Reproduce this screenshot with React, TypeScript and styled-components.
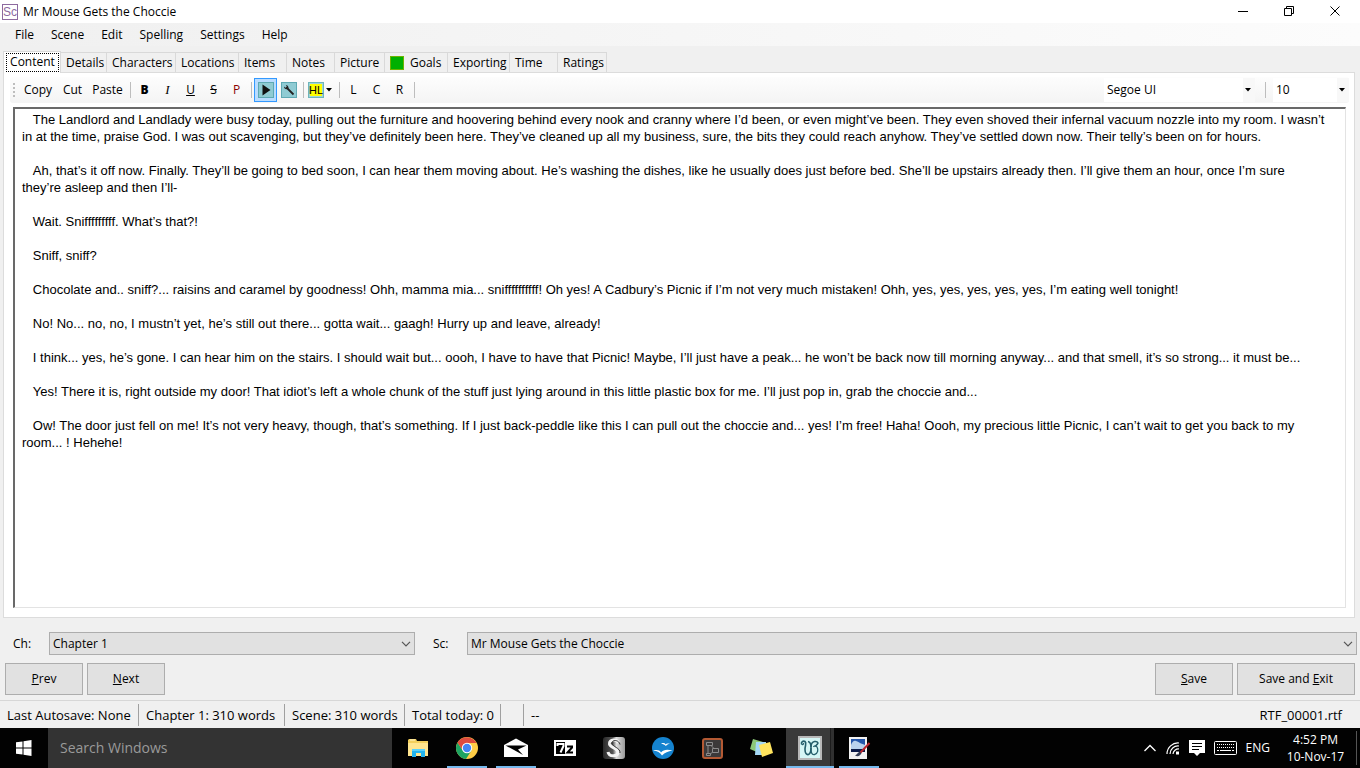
import React from 'react';
import styled, { createGlobalStyle, css } from 'styled-components';

const GlobalStyle = createGlobalStyle`
  *, *::before, *::after { box-sizing: border-box; }
  body { margin: 0; background: #f0f0f0; }
  body, button, select, textarea, input {
    font-family: 'Open Sans', 'Noto Sans', sans-serif;
    font-size: 12px;
    line-height: 16px;
    color: #000;
  }
  button { margin: 0; padding: 0; border: 0; background: none; }
`;

const Window = styled.div`
  display: flex;
  flex-direction: column;
  min-height: 100vh;
`;

const TitleBar = styled.header`
  display: flex;
  align-items: center;
  height: 23px;
  padding: 0 2px;
  background: #fff;
`;

const AppIcon = styled.span`
  width: 16px;
  height: 16px;
  border: 1px solid #8d6a9f;
  color: #8d6a9f;
  font: 12px/14px 'Liberation Sans', sans-serif;
  text-align: center;
`;

const Title = styled.h1`
  flex: 1;
  margin: 0 0 0 5px;
  font-size: 12px;
  font-weight: 400;
`;

const CaptionButton = styled.button`
  display: grid;
  place-items: center;
  width: 46px;
  height: 20px;
`;

const MenuBar = styled.nav`
  display: flex;
  align-items: center;
  gap: 1px;
  height: 23px;
  padding: 0 7px;
  background: linear-gradient(90deg, #f0f0f0, #fcfcfc);
`;

const MenuItem = styled.button`
  height: 20px;
  padding: 0 8px;
`;

const TabStrip = styled.div`
  display: flex;
  align-items: flex-end;
  height: 26px;
  padding: 0 3px;
`;

const Tab = styled.button<{ $width: number; $active?: boolean }>`
  display: flex;
  align-items: center;
  gap: 6px;
  width: ${p => p.$width}px;
  height: 20px;
  padding-left: 5px;
  border: 1px solid #d9d9d9;
  border-left-width: 0;
  border-bottom: 0;
  white-space: nowrap;
  ${p => p.$active && css`
    z-index: 1;
    height: 22px;
    margin-bottom: -1px;
    padding: 1px 1px 2px 2px;
    border-left-width: 1px;
    background: #fff;
  `}
`;

const FocusRing = styled.span`
  flex: 1;
  height: 19px;
  border: 1px dotted #000;
  line-height: 16px;
  text-align: center;
`;

const GoalMark = styled.span`
  width: 14px;
  height: 14px;
  border: 1px solid #6cb400;
  background: #00b000;
`;

const Panel = styled.main`
  display: flex;
  flex: 1;
  flex-direction: column;
  margin: 0 5px 0 3px;
  padding: 4px 8px 9px 9px;
  border: 1px solid #dcdcdc;
  background: #fff;
`;

const Toolbar = styled.div`
  display: flex;
  align-items: center;
  height: 26px;
  margin: 0 -3px 4px;
  padding-left: 3px;
  border-radius: 3px;
  background: linear-gradient(#fdfdfd, #f4f4f4);
`;

const Grip = styled.span`
  width: 2px;
  height: 14px;
  margin-right: 4px;
  background: repeating-linear-gradient(#bdbdbd 0 2px, transparent 2px 4px);
`;

const ToolButton = styled.button<{ $width: number }>`
  width: ${p => p.$width}px;
  height: 24px;
`;

const Bold = styled.b`
  font-weight: 800;
`;

const Italic = styled.i`
  font-family: 'Liberation Serif', serif;
  font-size: 13px;
`;

const Red = styled.span`
  color: #8b0000;
`;

const IconTool = styled.button<{ $pressed?: boolean }>`
  display: grid;
  place-items: center;
  width: 23px;
  height: 24px;
  border: 1px solid ${p => (p.$pressed ? '#3399ff' : 'transparent')};
  background: ${p => (p.$pressed ? '#b9dcff' : 'transparent')};
`;

const HighlightTool = styled.button`
  display: flex;
  align-items: center;
  gap: 2px;
  width: 30px;
  height: 24px;
  padding-left: 2px;
`;

const Swatch = styled.span`
  width: 16px;
  height: 16px;
  border: 1px solid #6fb5bb;
  background: linear-gradient(#ffff00, #ffff00) center / 12px 12px no-repeat, #9fd6da;
  font: 11px/14px 'Liberation Sans', sans-serif;
  text-align: center;
`;

const Divider = styled.span<{ $roomy?: boolean }>`
  width: 1px;
  height: 16px;
  margin: ${p => (p.$roomy ? '0 7px 0 10px' : '0 2px 0 3px')};
  background: #bdbdbd;
`;

const Spacer = styled.span`
  flex: 1;
`;

const SelectWrap = styled.span<{ $basis?: string }>`
  display: grid;
  align-items: center;
  flex: ${p => p.$basis ?? '1 1 0'};
  min-width: 0;

  & > * { grid-area: 1 / 1; }
  & > svg { justify-self: end; pointer-events: none; margin-right: 4px; }
`;

const ToolSelect = styled.select`
  width: 100%;
  height: 24px;
  padding: 0 20px 0 3px;
  border: 0;
  appearance: none;
  background: linear-gradient(90deg, #fff calc(100% - 12px), #f8f8f8 0);
`;

const FormSelect = styled.select`
  width: 100%;
  height: 23px;
  padding: 0 20px 0 3px;
  border: 1px solid #adadad;
  border-radius: 0;
  appearance: none;
  background: #e1e1e1;
`;

const Editor = styled.textarea`
  flex: 1;
  width: 100%;
  padding: 2px 19px 0 7px;
  border: solid;
  border-width: 2px 1px 1px 2px;
  border-color: #696969 #e3e3e3 #e3e3e3 #696969;
  outline: 0;
  resize: none;
  overflow: hidden;
  background: #fff;
  font-family: 'Liberation Sans', Arial, sans-serif;
  font-size: 13px;
  line-height: 17px;
`;

const PickerRow = styled.div`
  display: flex;
  align-items: center;
  margin-top: 14px;
  padding: 0 3px 0 13px;
`;

const PickerLabel = styled.label<{ $gap?: number }>`
  width: ${p => (p.$gap ? 52 : 36)}px;
  padding-left: ${p => p.$gap ?? 0}px;
`;

const Actions = styled.div`
  display: flex;
  gap: 4px;
  margin: 8px 5px 5px;
`;

const PushButton = styled.button<{ $wide?: boolean }>`
  width: ${p => (p.$wide ? 118 : 78)}px;
  height: 32px;
  border: 1px solid #adadad;
  background: #e1e1e1;
`;

const StatusBar = styled.footer`
  display: flex;
  align-items: center;
  height: 28px;
  padding: 2px 18px 2px 0;
  border-top: 1px solid #d7d7d7;
  font-size: 13px;
`;

const StatusCell = styled.span<{ $width: number; $last?: boolean }>`
  width: ${p => p.$width}px;
  height: 22px;
  padding-left: 7px;
  border-right: ${p => (p.$last ? '0' : '1px solid #a0a0a0')};
  line-height: 22px;
  white-space: nowrap;
`;

const TaskBar = styled.div`
  display: flex;
  align-items: stretch;
  height: 40px;
  background: #020202;
  color: #fff;
`;

const StartButton = styled.button`
  display: grid;
  place-items: center;
  width: 48px;
`;

const Search = styled.input`
  width: 344px;
  margin: 0 2px 0 0;
  padding: 0 12px;
  border: 0;
  background: #333;
  color: #fff;
  font-size: 14px;
  &::placeholder { color: #9a9a9a; opacity: 1; }
`;

const TaskButton = styled.button<{ $running?: boolean; $active?: boolean }>`
  display: grid;
  place-items: center;
  width: 48px;
  margin-right: 1px;
  background: ${p =>
    p.$active
      ? 'linear-gradient(#76b9ed, #76b9ed) bottom / 100% 2px no-repeat, linear-gradient(90deg, #3a3a3a 44px, #1c1c1c 44px 45px, #303030 45px)'
      : p.$running
        ? 'linear-gradient(#76b9ed, #76b9ed) bottom / 40px 2px no-repeat'
        : 'none'};
`;

const Tray = styled.div`
  display: flex;
  align-items: center;
  gap: 9px;
  margin-left: auto;
  padding-right: 3px;
`;

const TrayButton = styled.button`
  display: grid;
  color: #fff;
`;

const Clock = styled.time`
  width: 78px;
  padding-right: 4px;
  border-right: 1px solid #555;
  line-height: 17px;
  text-align: center;
`;

const MANUSCRIPT = [
  "The Landlord and Landlady were busy today, pulling out the furniture and hoovering behind every nook and cranny where I’d been, or even might’ve been. They even shoved their infernal vacuum nozzle into my room. I wasn’t in at the time, praise God. I was out scavenging, but they’ve definitely been here. They’ve cleaned up all my business, sure, the bits they could reach anyhow. They’ve settled down now. Their telly’s been on for hours.",
  "Ah, that’s it off now. Finally. They’ll be going to bed soon, I can hear them moving about. He’s washing the dishes, like he usually does just before bed. She’ll be upstairs already then. I’ll give them an hour, once I’m sure they’re asleep and then I’ll-",
  "Wait. Snifffffffff. What’s that?!",
  "Sniff, sniff?",
  "Chocolate and.. sniff?... raisins and caramel by goodness! Ohh, mamma mia... sniffffffffff! Oh yes! A Cadbury’s Picnic if I’m not very much mistaken! Ohh, yes, yes, yes, yes, yes, I’m eating well tonight!",
  "No! No... no, no, I mustn’t yet, he’s still out there... gotta wait... gaagh! Hurry up and leave, already!",
  "I think... yes, he’s gone. I can hear him on the stairs. I should wait but... oooh, I have to have that Picnic! Maybe, I’ll just have a peak... he won’t be back now till morning anyway... and that smell, it’s so strong... it must be...",
  "Yes! There it is, right outside my door! That idiot’s left a whole chunk of the stuff just lying around in this little plastic box for me. I’ll just pop in, grab the choccie and...",
  "Ow! The door just fell on me! It’s not very heavy, though, that’s something. If I just back-peddle like this I can pull out the choccie and... yes! I’m free! Haha! Oooh, my precious little Picnic, I can’t wait to get you back to my room... ! Hehehe!",
].map(p => '\u00a0\u00a0\u00a0' + p).join('\n\n');

const MENUS = ['File', 'Scene', 'Edit', 'Spelling', 'Settings', 'Help'];

const TABS: [string, number][] = [
  ['Details', 46], ['Characters', 69], ['Locations', 63], ['Items', 48], ['Notes', 48],
  ['Picture', 50], ['Goals', 63], ['Exporting', 62], ['Time', 48], ['Ratings', 49],
];

const Triangle = () => (
  <svg width="6" height="4" viewBox="0 0 6 4"><path d="M0 0h6L3 3.5z" fill="#000" /></svg>
);

const Chevron = () => (
  <svg width="10" height="6" viewBox="0 0 10 6" fill="none" stroke="#555" strokeWidth="1.2"><path d="M1 .8l4 4 4-4" /></svg>
);

const PlayIcon = () => (
  <svg width="16" height="16" viewBox="0 0 16 16">
    <rect x=".5" y=".5" width="15" height="15" fill="#8fcbd3" stroke="#5ea9b3" />
    <path d="M4.500 2.500v11l8-5.500z" fill="#111" />
  </svg>
);

const WrenchIcon = () => (
  <svg width="16" height="16" viewBox="0 0 16 16">
    <rect x=".5" y=".5" width="15" height="15" fill="#8fcbd3" stroke="#5ea9b3" />
    <path d="M6.500 6.500l6 6" stroke="#222" strokeWidth="1.800" />
    <path d="M3 4.500c0 2 1.500 3.200 3.500 2.700l1-1C7.800 4.500 6.500 3 4.800 3l1 1.500L4.500 5.700z" fill="#222" />
  </svg>
);

const FolderIcon = () => (
  <svg width="22" height="20" viewBox="0 0 22 20">
    <path d="M1 2l1-1h7l1 2h11v15H1z" fill="#f3cf5c" />
    <path d="M1 5h20v13H1z" fill="#ffe58f" />
    <path d="M3 1.500h5v1H3z" fill="#fff6d0" />
    <path d="M5 19v-8h13v8h-4v-4H9v4z" fill="#23b5ee" />
    <path d="M5 11h13v2H5z" fill="#5ad1fa" />
  </svg>
);

const ChromeIcon = () => (
  <svg width="22" height="22" viewBox="0 0 22 22">
    <circle cx="11" cy="11" r="11" fill="#ffcd46" />
    <path d="M1.500 5.500A11 11 0 0 0 10 22l5.500-8.500L11 11l-4.500 2z" fill="#1da462" />
    <path d="M1.500 5.500L6.500 13l4.500-7h9.500A11 11 0 0 0 1.500 5.500z" fill="#dd4b3e" />
    <circle cx="11" cy="11" r="5.200" fill="#fff" />
    <circle cx="11" cy="11" r="4.200" fill="#4285f4" />
  </svg>
);

const MailIcon = () => (
  <svg width="24" height="20" viewBox="0 0 24 20">
    <path d="M0 7l12-6.500L24 7v12H0z" fill="#fff" />
    <path d="M1.500 7.500h21L14 11.500l5 5.500-9-5z" fill="#020202" />
  </svg>
);

const ZipIcon = () => (
  <svg width="22" height="16" viewBox="0 0 22 16">
    <path d="M0 0h22v16H0z" fill="#fff" />
    <path d="M2 2h9v12H2z" fill="#000" />
    <path d="M3.500 6V4h6v2L6.500 12.500" fill="none" stroke="#fff" strokeWidth="2" />
    <path d="M13 6.500h5v1l-4.500 5H19" fill="none" stroke="#000" strokeWidth="2" />
  </svg>
);

const ScrivenerIcon = () => (
  <svg width="22" height="22" viewBox="0 0 22 22">
    <defs>
      <linearGradient id="scriv"><stop offset="0" stopColor="#2a2a2a" /><stop offset=".45" stopColor="#555" /><stop offset=".6" stopColor="#ddd" /><stop offset="1" stopColor="#999" /></linearGradient>
    </defs>
    <rect width="22" height="22" rx="3" fill="url(#scriv)" />
    <path d="M15.500 6C14 1.500 6 2 6.500 7c.5 4 9 4 8.500 8.500C14.500 20 6 20 5 15" fill="none" stroke="#f4f4f4" strokeWidth="3" />
    <path d="M17 7.500C16 2.500 9 2.500 9 6c0 4 8.500 4.500 8 10" fill="none" stroke="#333" />
  </svg>
);

const OfficeIcon = () => (
  <svg width="22" height="22" viewBox="0 0 22 22">
    <circle cx="11" cy="11" r="11" fill="#1583cf" />
    <path d="M9 6.500c2.500-.8 4-.3 4.500 1 1-1.300 2.500-1.300 4.500-.8-2 .3-3 1-4.200 2.300-1.300-1.500-2.500-2-4.800-2.500z" fill="#fff" />
    <path d="M1 13.500c4-1 6.500-.5 8 2 2.500-3 6-3.300 11.500-2-4.500 1-7.500 2-10.500 5-2-3-4.500-4.500-9-5z" fill="#fff" />
  </svg>
);

const DiagramIcon = () => (
  <svg width="21" height="21" viewBox="0 0 21 21" fill="none">
    <rect x="1" y="1" width="19" height="19" rx="2" fill="#3c3a3a" stroke="#b45a34" strokeWidth="2" />
    <path d="M4.500 4.500h6v3h-6zM10.500 10.500h6v4h-6zM4.500 15.500h4v2h-4zM6 7.500v8M9 7.500l3 3M8.500 16l2-2" stroke="#8c8c8c" />
  </svg>
);

const NotesIcon = () => (
  <svg width="24" height="20" viewBox="0 0 24 20">
    <path d="M4 1l10 3-4 11-9-4z" fill="#8cc878" />
    <path d="M7 4h10v13H6z" fill="#a5d8f5" />
    <path d="M10 7l11-3 3 11-11 4z" fill="#ffe45e" />
  </svg>
);

const WriterIcon = () => (
  <svg width="24" height="24" viewBox="0 0 24 24" fill="none" stroke="#245e6b">
    <rect x="1" y="1" width="22" height="22" fill="#d5f6f5" stroke="#b8b8b8" strokeWidth="2" />
    <path d="M3.500 8C3 5.500 5.500 4.500 7 5.500c2 1.500 0 4 0 8 0 3.500 1.500 5.500 3.500 5 2-.8 2.500-3.500 2.500-7 0-3-.5-5.500-3-6" strokeWidth="1.600" />
    <path d="M3.500 8c1 1 2.500.3 2-1M13 12c0 4 .5 7 3.500 6.500 3.500-.8 4-5 2.500-7.500-1-1.500-3-1.500-3.500 0" strokeWidth="1.300" />
    <path d="M13 11c0-3 1-5 3.500-5.500 1.500-.3 3 .2 3.500 1.500-.5 1.500-2 2.500-3 3.500" strokeWidth="1.500" />
  </svg>
);

const PaintIcon = () => (
  <svg width="24" height="24" viewBox="0 0 24 24">
    <path d="M2 1h18v22H2z" fill="#f2f2f2" />
    <path d="M4 3h14v12H4z" fill="#2456ab" />
    <path d="M4 9c1-3 3-5 5-4s3 1 4 2 4 1 5 2v5H4z" fill="#b9d2ee" />
    <path d="M4 13h14v3H4z" fill="#0a1a48" />
    <path d="M22.500 7L13 17" stroke="#b9242c" strokeWidth="2" />
    <path d="M13 16c-2.500 0-2.500 2.500-5 3.500 2.500 1.500 5.500.5 6.500-2.500z" fill="#333c55" />
  </svg>
);

const TASKS: { name: string; icon: React.ReactNode; running?: boolean; active?: boolean }[] = [
  { name: 'File Explorer', icon: <FolderIcon /> },
  { name: 'Chrome', icon: <ChromeIcon />, running: true },
  { name: 'Mail', icon: <MailIcon />, running: true },
  { name: '7-Zip', icon: <ZipIcon /> },
  { name: 'Scrivener', icon: <ScrivenerIcon /> },
  { name: 'OpenOffice', icon: <OfficeIcon /> },
  { name: 'Diagrams', icon: <DiagramIcon /> },
  { name: 'Sticky Notes', icon: <NotesIcon /> },
  { name: 'yWriter', icon: <WriterIcon />, active: true },
  { name: 'Paint', icon: <PaintIcon />, running: true },
];

export default function App() {
  return (
    <Window>
      <GlobalStyle />
      <TitleBar>
        <AppIcon>Sc</AppIcon>
        <Title>Mr Mouse Gets the Choccie</Title>
        <CaptionButton aria-label="Minimize">
          <svg width="10" height="10"><path d="M0 4.500h10" stroke="#000" /></svg>
        </CaptionButton>
        <CaptionButton aria-label="Restore">
          <svg width="11" height="11" fill="none" stroke="#000"><path d="M.5 2.500h7v7h-7zM2.500 2.500v-2h7v7h-2" /></svg>
        </CaptionButton>
        <CaptionButton aria-label="Close">
          <svg width="11" height="11" stroke="#000"><path d="M.5 .5l9 9M9.500 .5l-9 9" /></svg>
        </CaptionButton>
      </TitleBar>

      <MenuBar>
        {MENUS.map(m => <MenuItem key={m}>{m}</MenuItem>)}
      </MenuBar>

      <TabStrip role="tablist">
        <Tab role="tab" aria-selected $width={58} $active><FocusRing>Content</FocusRing></Tab>
        {TABS.map(([name, width]) => (
          <Tab key={name} role="tab" $width={width}>
            {name === 'Goals' && <GoalMark />}
            {name}
          </Tab>
        ))}
      </TabStrip>

      <Panel>
        <Toolbar role="toolbar">
          <Grip />
          <ToolButton $width={38}>Copy</ToolButton>
          <ToolButton $width={31}>Cut</ToolButton>
          <ToolButton $width={39}>Paste</ToolButton>
          <Divider />
          <ToolButton $width={23}><Bold>B</Bold></ToolButton>
          <ToolButton $width={23}><Italic>I</Italic></ToolButton>
          <ToolButton $width={23}><u>U</u></ToolButton>
          <ToolButton $width={23}><s>S</s></ToolButton>
          <ToolButton $width={23}><Red>P</Red></ToolButton>
          <Divider />
          <IconTool $pressed aria-label="Play"><PlayIcon /></IconTool>
          <IconTool aria-label="Tools"><WrenchIcon /></IconTool>
          <Divider />
          <HighlightTool><Swatch>HL</Swatch><Triangle /></HighlightTool>
          <Divider />
          <ToolButton $width={23}>L</ToolButton>
          <ToolButton $width={23}>C</ToolButton>
          <ToolButton $width={23}>R</ToolButton>
          <Divider />
          <Spacer />
          <SelectWrap $basis="0 0 151px">
            <ToolSelect aria-label="Font"><option>Segoe UI</option></ToolSelect>
            <Triangle />
          </SelectWrap>
          <Divider $roomy />
          <SelectWrap $basis="0 0 76px">
            <ToolSelect aria-label="Font size"><option>10</option></ToolSelect>
            <Triangle />
          </SelectWrap>
        </Toolbar>
        <Editor aria-label="Scene content" spellCheck={false} defaultValue={MANUSCRIPT} />
      </Panel>

      <PickerRow>
        <PickerLabel htmlFor="chapter">Ch:</PickerLabel>
        <SelectWrap $basis="0 0 366px">
          <FormSelect id="chapter"><option>Chapter 1</option></FormSelect>
          <Chevron />
        </SelectWrap>
        <PickerLabel htmlFor="scene" $gap={18}>Sc:</PickerLabel>
        <SelectWrap>
          <FormSelect id="scene"><option>Mr Mouse Gets the Choccie</option></FormSelect>
          <Chevron />
        </SelectWrap>
      </PickerRow>

      <Actions>
        <PushButton><u>P</u>rev</PushButton>
        <PushButton><u>N</u>ext</PushButton>
        <Spacer />
        <PushButton><u>S</u>ave</PushButton>
        <PushButton $wide>Save and <u>E</u>xit</PushButton>
      </Actions>

      <StatusBar>
        <StatusCell $width={139}>Last Autosave: None</StatusCell>
        <StatusCell $width={146}>Chapter 1: 310 words</StatusCell>
        <StatusCell $width={120}>Scene: 310 words</StatusCell>
        <StatusCell $width={96}>Total today: 0</StatusCell>
        <StatusCell $width={23} />
        <StatusCell $width={40} $last>--</StatusCell>
        <Spacer />
        <span>RTF_00001.rtf</span>
      </StatusBar>

      <TaskBar>
        <StartButton aria-label="Start">
          <svg width="16" height="16" fill="#fff"><path d="M0 2.300L6.500 1.400v6.100H0zM7.500 1.300L15.500 0v7.500h-8zM0 8.500h6.500v6.100L0 13.700zM7.500 8.500h8V16l-8-1.200z" /></svg>
        </StartButton>
        <Search aria-label="Search Windows" placeholder="Search Windows" />
        {TASKS.map(t => (
          <TaskButton key={t.name} aria-label={t.name} $running={t.running} $active={t.active}>{t.icon}</TaskButton>
        ))}
        <Tray>
          <TrayButton aria-label="Show hidden icons">
            <svg width="14" height="8" fill="none" stroke="#fff" strokeWidth="1.300"><path d="M1.500 7L7 1.500 12.500 7" /></svg>
          </TrayButton>
          <TrayButton aria-label="Network">
            <svg width="14" height="14" viewBox="2 0 14 14" fill="none" stroke="#fff" strokeWidth="1.200">
              <path d="M3 13A11 11 0 0 1 15 2M6 13a8 8 0 0 1 9-8M9 13a5.500 5.500 0 0 1 6-5" />
              <path d="M12 10.500h3v3h-3z" fill="#fff" stroke="none" />
            </svg>
          </TrayButton>
          <TrayButton aria-label="Notifications">
            <svg width="16" height="16"><path d="M0 0h16v13h-5l-3 3-3-3H0z" fill="#fff" /><path d="M3 3.500h10M3 6.500h10M3 9.500h7" stroke="#000" /></svg>
          </TrayButton>
          <TrayButton aria-label="Touch keyboard">
            <svg width="23" height="14" fill="none" stroke="#fff"><rect x=".5" y=".5" width="22" height="13" rx="1" /><path d="M3 3.500h17M3 6.500h17" strokeDasharray="1 1" /><path d="M3 9.500h2M6 9.500h11M18 9.500h2" /></svg>
          </TrayButton>
          <TrayButton>ENG</TrayButton>
          <Clock>4:52 PM<br />10-Nov-17</Clock>
        </Tray>
      </TaskBar>
    </Window>
  );
}
